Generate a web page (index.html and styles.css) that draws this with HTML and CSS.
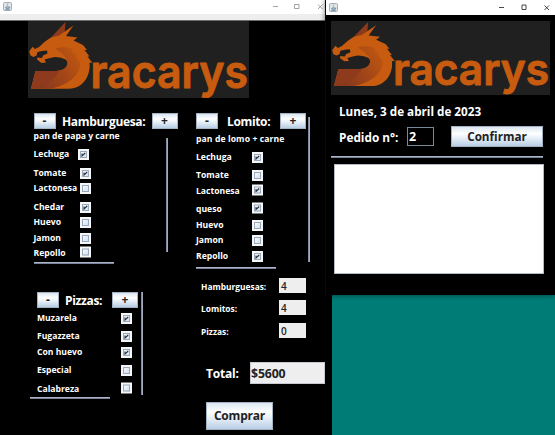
FILE: index.html
```html
<!DOCTYPE html>
<html lang="es">
<head>
<meta charset="utf-8">
<title>Dracarys</title>
<link rel="stylesheet" href="styles.css">
</head>
<body>
<svg class="defs" aria-hidden="true">
  <defs>
    <linearGradient id="neck" gradientUnits="userSpaceOnUse" x1="14" y1="64" x2="56" y2="36">
      <stop offset="0" stop-color="#8a3a1c"/><stop offset=".45" stop-color="#a24618"/><stop offset="1" stop-color="#c2580f"/>
    </linearGradient>
    <symbol id="logo" viewBox="0 0 221 77" preserveAspectRatio="none">
      <rect width="221" height="77" fill="#202020"/>
      <path fill="#8b3b1c" d="M23 16.500 37.500 1 36.500 13 28 19z"/>
      <path fill="#c75b0f" d="M17 20.500 23 16.500 31 14.500 45.500 4.500 38 15 49.500 16.500 45.500 19.500 55 24 59 29 56.500 29 61.500 35.500 59.500 35.500 64.500 42 61.500 41.500C63 53 56 67.700 41 67.700H3L7.500 50H28C35 50 40 46 39.500 41.500 39 38 34 36.500 27 36L22 37 16.500 38.500 18 41.500 13.500 42 9 38.500 9.500 36.500 14 37 15 34.500 19.500 32.500 19 29.500 14 30 9.500 31 8.500 34.500 5.500 36 2.500 34.500 1.200 30.500 4.500 25.700 7 28 11 26z"/>
      <path fill="url(#neck)" d="M3 67.700 7.500 50H28C35 50 40 46 39.500 41.500 39 37 36 35 33 31.500L27 27.500C33 25.500 40 26 44.500 28L43.500 30 49 35 47.500 36 52 41C53 53 42 64 22 67.700z"/>
      <path fill="#8d3b1c" d="M7.500 50H28L31.500 49.500C27 58 17 66 3 67.700z"/>
      <path fill="#202020" d="M10 34.500 12 31.500 18.500 30.500 15.500 33.500 13.500 36z"/>
      <text class="logo-text" x="62.500" y="67" textLength="157.500" lengthAdjust="spacingAndGlyphs">racarys</text>
    </symbol>
    <symbol id="java" viewBox="0 0 9 9">
      <rect x=".5" y=".5" width="8" height="8" rx="1" fill="#dfe7ed" stroke="#8f9ca5" stroke-width=".8"/>
      <path d="M4.8 1.4C3 3 5.7 3 4.3 4.6" fill="none" stroke="#d98a4b" stroke-width=".8"/>
      <path d="M2.7 5h3.5v1.3H3zM2.2 7.4h4.6M6.2 5.2h1" fill="none" stroke="#54768f" stroke-width=".7"/>
    </symbol>
    <symbol id="tick" viewBox="0 0 7 7"><path d="M2 2.600v2.400L5.200 2" fill="none" stroke="#26313d" stroke-width="1.100"/></symbol>
  </defs>
</svg>

<section class="window main">
  <header class="titlebar">
    <svg class="app-icon"><use href="#java"/></svg>
    <svg class="controls" viewBox="0 0 54 12"><path d="M1 6.500h5M22.500 4.500h4.500v4h-4.500zM46 4.500l4.500 4.500M50.500 4.500L46 9"/></svg>
  </header>
  <div class="strip"></div>
  <svg class="logo"><use href="#logo"/></svg>
  <div class="columns">
    <div class="left">
      <article class="group burger">
        <div class="head"><button>-</button><h2>Hamburguesa:</h2><button class="plus">+</button></div>
        <p>pan de papa y carne</p>
        <div class="body">
          <ul>
            <li class="first"><span>Lechuga</span><i><svg><use href="#tick"/></svg></i></li>
            <li class="gap"><span>Tomate</span><i><svg><use href="#tick"/></svg></i></li>
            <li><span>Lactonesa</span><i><svg></svg></i></li>
            <li class="gap"><span>Chedar</span><i><svg><use href="#tick"/></svg></i></li>
            <li><span>Huevo</span><i><svg></svg></i></li>
            <li><span>Jamon</span><i><svg></svg></i></li>
            <li><span>Repollo</span><i class="raised"><svg></svg></i></li>
          </ul>
          <div class="rule"></div>
        </div>
        <hr>
      </article>
      <article class="group pizza">
        <div class="stack">
          <div class="head"><button>-</button><h2>Pizzas:</h2><button class="plus">+</button></div>
          <ul>
            <li><span>Muzarela</span><i><svg><use href="#tick"/></svg></i></li>
            <li class="gap"><span>Fugazzeta</span><i><svg><use href="#tick"/></svg></i></li>
            <li><span>Con huevo</span><i><svg><use href="#tick"/></svg></i></li>
            <li class="gap"><span>Especial</span><i><svg></svg></i></li>
            <li class="gap"><span>Calabreza</span><i class="raised"><svg></svg></i></li>
          </ul>
          <hr>
        </div>
        <div class="rule"></div>
      </article>
    </div>
    <div class="middle">
      <article class="group lomito">
        <div class="stack">
          <div class="head"><button>-</button><h2>Lomito:</h2><button class="plus">+</button></div>
          <p>pan de lomo + carne</p>
          <ul>
            <li><span>Lechuga</span><i><svg><use href="#tick"/></svg></i></li>
            <li class="gap"><span>Tomate</span><i><svg></svg></i></li>
            <li><span>Lactonesa</span><i class="raised"><svg><use href="#tick"/></svg></i></li>
            <li class="gap"><span>queso</span><i class="raised"><svg><use href="#tick"/></svg></i></li>
            <li><span>Huevo</span><i><svg></svg></i></li>
            <li><span>Jamon</span><i><svg></svg></i></li>
            <li><span>Repollo</span><i><svg><use href="#tick"/></svg></i></li>
          </ul>
          <hr>
        </div>
        <div class="rule"></div>
      </article>
      <dl class="counts">
        <div><dt>Hamburguesas:</dt><dd>4</dd></div>
        <div><dt>Lomitos:</dt><dd>4</dd></div>
        <div><dt>Pizzas:</dt><dd>0</dd></div>
      </dl>
      <div class="total"><span>Total:</span><output>$5600</output></div>
      <button class="buy">Comprar</button>
    </div>
  </div>
</section>

<section class="window order">
  <header class="titlebar">
    <svg class="app-icon"><use href="#java"/></svg>
    <svg class="controls" viewBox="0 0 54 12"><path d="M1 6.500h5M24 4h4v4.500h-4zM46.500 4.500l4.500 4.500M51 4.500L46.500 9"/></svg>
  </header>
  <svg class="logo"><use href="#logo"/></svg>
  <div class="date">Lunes, 3 de abril de 2023</div>
  <div class="pedido"><label>Pedido n°:</label><output>2</output><button>Confirmar</button></div>
  <hr>
  <div class="detail"></div>
</section>
</body>
</html>
```
FILE: styles.css
```css
* { box-sizing: border-box; }
body {
  margin: 0; width: 555px; height: 435px; overflow: hidden; position: relative;
  background: #007c76; color: #fff;
  font: 700 8.6px/11px "Open Sans", "Noto Sans", sans-serif;
}
.defs { position: absolute; width: 0; height: 0; }
h2, p, ul, dl, dd { margin: 0; padding: 0; list-style: none; }
svg { display: block; flex: none; }
span, h2, p, dt, label, .date { white-space: nowrap; }

.window { position: absolute; top: 0; background: #000; }
.main { left: 0; width: 332px; height: 435px; }
.order { left: 325px; width: 230px; height: 295px; border-left: 1px solid #0b0b0b; box-shadow: 0 0 5px rgba(0,0,0,.55); }

.titlebar { display: flex; justify-content: space-between; background: #fff; height: 14px; }
.order .titlebar { height: 15px; }
.app-icon { width: 9px; height: 9px; margin: 2px 0 0 3px; }
.order .app-icon { margin-top: 3px; }
.controls { width: 54px; height: 12px; fill: none; stroke: #999; stroke-width: .9; margin-right: 6px; }
.order .controls { stroke: #333; margin: 1px 3px 0 0; stroke-width: .9; }
.strip { height: 7px; background: #eee; border-bottom: 1px solid #69706e; }

.logo { width: 221px; height: 77px; margin-left: 28px; }
.order .logo { width: 219px; height: 74px; margin: 6px 0 0 5px; }
.logo-text { font: 600 46px Inter, "Open Sans", sans-serif; fill: #c75b0f; stroke: #c75b0f; stroke-width: 1; stroke-linejoin: round; }

button {
  font: 700 12px/14px "Open Sans", sans-serif; color: #222; padding: 0; flex: none;
  width: 22px; height: 16px; border: 1px solid #a3b3c3; border-radius: 0;
  background: linear-gradient(#dbe6f1, #fff 35%, #e5eef7 60%, #b9cee4);
}
.plus { width: 26px; }
h2 { font-size: 12px; line-height: 17px; letter-spacing: -.35px; }
hr { border: 0; height: 2px; width: 80px; margin: 0; background: linear-gradient(#c3cbd9, #626b87); }
.rule { width: 2px; flex: none; background: linear-gradient(90deg, #6e7892, #b4bdcc); }

.columns { display: flex; }
.left { width: 196px; padding-top: 15px; }
.middle { padding-top: 15px; }
.head { display: flex; height: 16px; }
.head h2 { flex: none; }
.stack { flex: none; }
li { display: flex; align-items: center; height: 15.5px; }
.gap { margin-top: 3px; }
i { width: 11px; height: 11px; flex: none; padding: 2px; background: #f4f6f8; }
i svg { width: 7px; height: 7px; outline: 1px solid #9aa8ba; outline-offset: -1px; background: linear-gradient(135deg, #fff, #cadcf0); }
.raised { transform: translateY(-1.5px); }

.burger { padding-left: 33.5px; height: 179px; }
.burger h2 { margin-left: 6.5px; width: 89.5px; }
.burger p { margin-top: 1px; height: 8px; line-height: 12px; }
.burger .body { display: flex; height: 114px; }
.burger ul { width: 132px; padding-top: 8.800px; }
.burger li span { width: 46.5px; }
.burger .first span { width: 44.5px; }
.burger hr { margin-top: 10px; }

.pizza { display: flex; padding-left: 37px; }
.pizza .stack { width: 104px; }
.pizza h2 { margin-left: 6px; width: 47px; }
.pizza ul { padding-top: 2.400px; }
.pizza li span { width: 84px; }
.pizza hr { margin: 0 0 0 -7px; }
.pizza .rule { height: 103px; }

.lomito { display: flex; height: 165px; }
.lomito .stack { width: 112px; }
.lomito h2 { margin-left: 9px; width: 53px; }
.lomito p { margin-top: 5px; height: 12px; letter-spacing: .1px; }
.lomito ul { padding-top: 3.500px; }
.lomito li span { width: 56px; }
.lomito hr { margin-top: 2.500px; }
.lomito .rule { height: 145px; margin-top: 4px; }

.counts { padding-left: 5px; height: 84px; display: grid; grid-template-rows: 22px 23px 15px; align-content: start; }
.counts div { display: flex; }
.counts dt { width: 78px; line-height: 17px; font-size: 8.4px; }
.counts dd { width: 27px; height: 15px; background: #eee; color: #222; font-size: 10px; font-weight: 600; line-height: 16px; padding-left: 2px; }
.total { display: flex; padding-left: 10px; }
.total span { width: 44px; font-size: 12px; line-height: 23px; letter-spacing: -.2px; }
.total output { width: 75px; height: 22px; background: #eee; border: 1px solid #c7cbd1; color: #222; font-size: 12.300px; line-height: 21px; letter-spacing: -.15px; }
.buy { display: block; width: 67px; height: 28px; margin: 17px 0 0 10px; font-size: 12px; line-height: 26px; letter-spacing: -.2px; }

.date { margin: 8px 0 0 13px; font-size: 11.700px; line-height: 16px; }
.pedido { display: flex; align-items: center; margin: 7px 0 0 13px; height: 21px; }
.pedido label { width: 68px; font-size: 11.8px; line-height: 20px; padding-top: 1px; }
.pedido output { width: 27px; height: 19px; border: 1px solid #7a8a99; font-size: 12.500px; line-height: 18px; padding-left: 1px; }
.pedido button { width: 92px; height: 21px; margin-left: 17px; font-size: 11.700px; line-height: 19px; }
.order hr { width: 212px; margin: 9px 0 0 5px; }
.detail { width: 210px; height: 110px; margin: 6px 0 0 8px; background: #fff; border: 1px solid #b3bac2; }
```
